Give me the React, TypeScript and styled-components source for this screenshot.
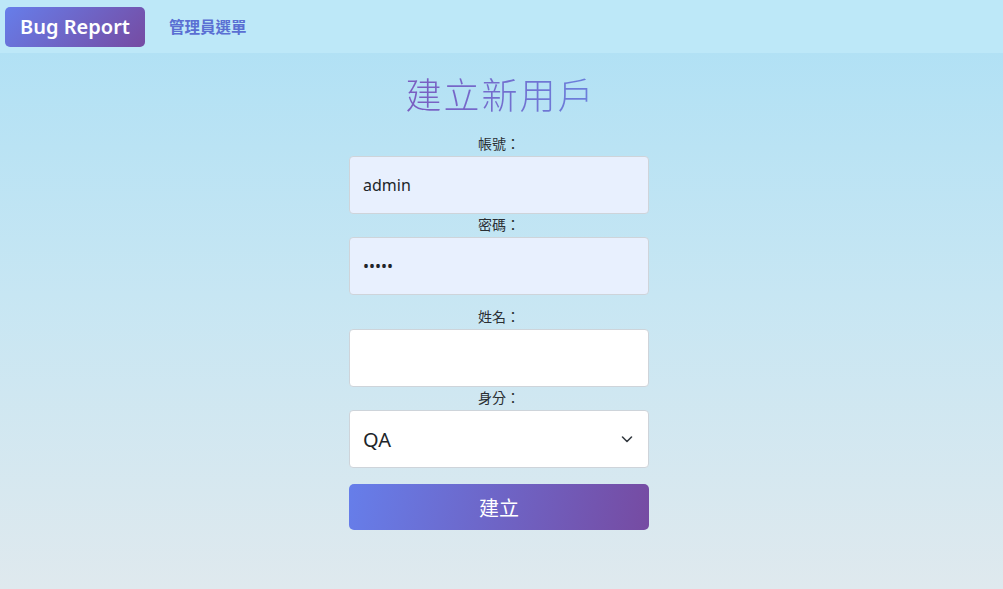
import React from "react";
import styled, { createGlobalStyle } from "styled-components";

const GlobalStyle = createGlobalStyle`
  html, body {
    margin: 0;
    padding: 0;
  }
  body {
    font-family: "Noto Sans", "Noto Sans CJK TC", sans-serif;
    color: #212529;
  }
  * {
    box-sizing: border-box;
  }
`;

function App() {
  return (
    <Page>
      <GlobalStyle />
      <Navbar>
        <Brand>Bug Report</Brand>
        <NavLink>管理員選單</NavLink>
      </Navbar>
      <Main>
        <Title>建立新用戶</Title>
        <Form>
          <Field>
            <Label>帳號：</Label>
            <Input $filled defaultValue="admin" />
          </Field>
          <Field $extra>
            <Label>密碼：</Label>
            <Input $filled type="password" defaultValue="admin" />
          </Field>
          <Field>
            <Label>姓名：</Label>
            <Input />
          </Field>
          <Field>
            <Label>身分：</Label>
            <SelectWrap>
              <Select defaultValue="QA">
                <option value="QA">QA</option>
                <option value="RD">RD</option>
                <option value="PM">PM</option>
              </Select>
              <Chevron viewBox="0 0 16 16">
                <path
                  d="M3.5 6l4.5 4.5L12.5 6"
                  fill="none"
                  stroke="#343a40"
                  strokeWidth="1.6"
                  strokeLinecap="round"
                  strokeLinejoin="round"
                />
              </Chevron>
            </SelectWrap>
          </Field>
          <Submit type="button">建立</Submit>
        </Form>
      </Main>
    </Page>
  );
}

export default App;

const Page = styled.div`
  min-height: 589px;
  display: flex;
  flex-direction: column;
  background: linear-gradient(180deg, #ade0f5 0%, #c7e6f3 50%, #dfe9ee 100%);
`;

const Navbar = styled.nav`
  height: 53px;
  display: flex;
  align-items: center;
  padding: 0 5px;
  gap: 24px;
  background: #bde8f8;
`;

const Brand = styled.div`
  height: 40px;
  width: 140px;
  display: flex;
  align-items: center;
  justify-content: center;
  border-radius: 5px;
  color: #fff;
  font-size: 20px;
  font-weight: 600;
  background: linear-gradient(135deg, #667eea 0%, #764ba2 100%);
`;

const NavLink = styled.a`
  font-size: 15.5px;
  font-weight: 600;
  color: #5a6fd3;
  cursor: pointer;
`;

const Main = styled.main`
  display: flex;
  flex-direction: column;
  align-items: center;
  padding: 21px 5px 0 0;
`;

const Title = styled.h1`
  margin: 0 0 16px 3px;
  font-size: 36px;
  line-height: 44px;
  font-weight: 300;
  letter-spacing: 2px;
  background: linear-gradient(90deg, #7b5cc0 0%, #6b80dc 100%);
  -webkit-background-clip: text;
  background-clip: text;
  color: transparent;
`;

const Form = styled.form`
  width: 300px;
  display: flex;
  flex-direction: column;
`;

const Field = styled.div<{ $extra?: boolean }>`
  display: flex;
  flex-direction: column;
  margin-bottom: ${(p) => (p.$extra ? "12px" : "1px")};
`;

const Label = styled.label`
  text-align: center;
  font-size: 14px;
  line-height: 20px;
  margin-bottom: 2px;
  color: #2b2f33;
`;

const Input = styled.input<{ $filled?: boolean }>`
  height: 58px;
  width: 100%;
  padding: 0 13px;
  font-family: "Noto Sans", "Noto Sans CJK TC", sans-serif;
  font-size: 16px;
  color: #212529;
  border: 1px solid #ced4da;
  border-radius: 4px;
  background: ${(p) => (p.$filled ? "#e8f0fe" : "#fff")};
  outline: none;
`;

const SelectWrap = styled.div`
  position: relative;
`;

const Select = styled.select`
  appearance: none;
  height: 58px;
  width: 100%;
  padding: 0 13px;
  font-family: "Noto Sans", "Noto Sans CJK TC", sans-serif;
  font-size: 20px;
  color: #212529;
  border: 1px solid #ced4da;
  border-radius: 4px;
  background: #fff;
  outline: none;
`;

const Chevron = styled.svg`
  position: absolute;
  right: 14px;
  top: 21px;
  width: 16px;
  height: 16px;
  pointer-events: none;
`;

const Submit = styled.button`
  margin-top: 15px;
  height: 46px;
  width: 100%;
  border: none;
  border-radius: 5px;
  color: #fff;
  font-family: "Noto Sans", "Noto Sans CJK TC", sans-serif;
  font-size: 20px;
  background: linear-gradient(100deg, #667eea 0%, #764ba2 100%);
  cursor: pointer;
`;
